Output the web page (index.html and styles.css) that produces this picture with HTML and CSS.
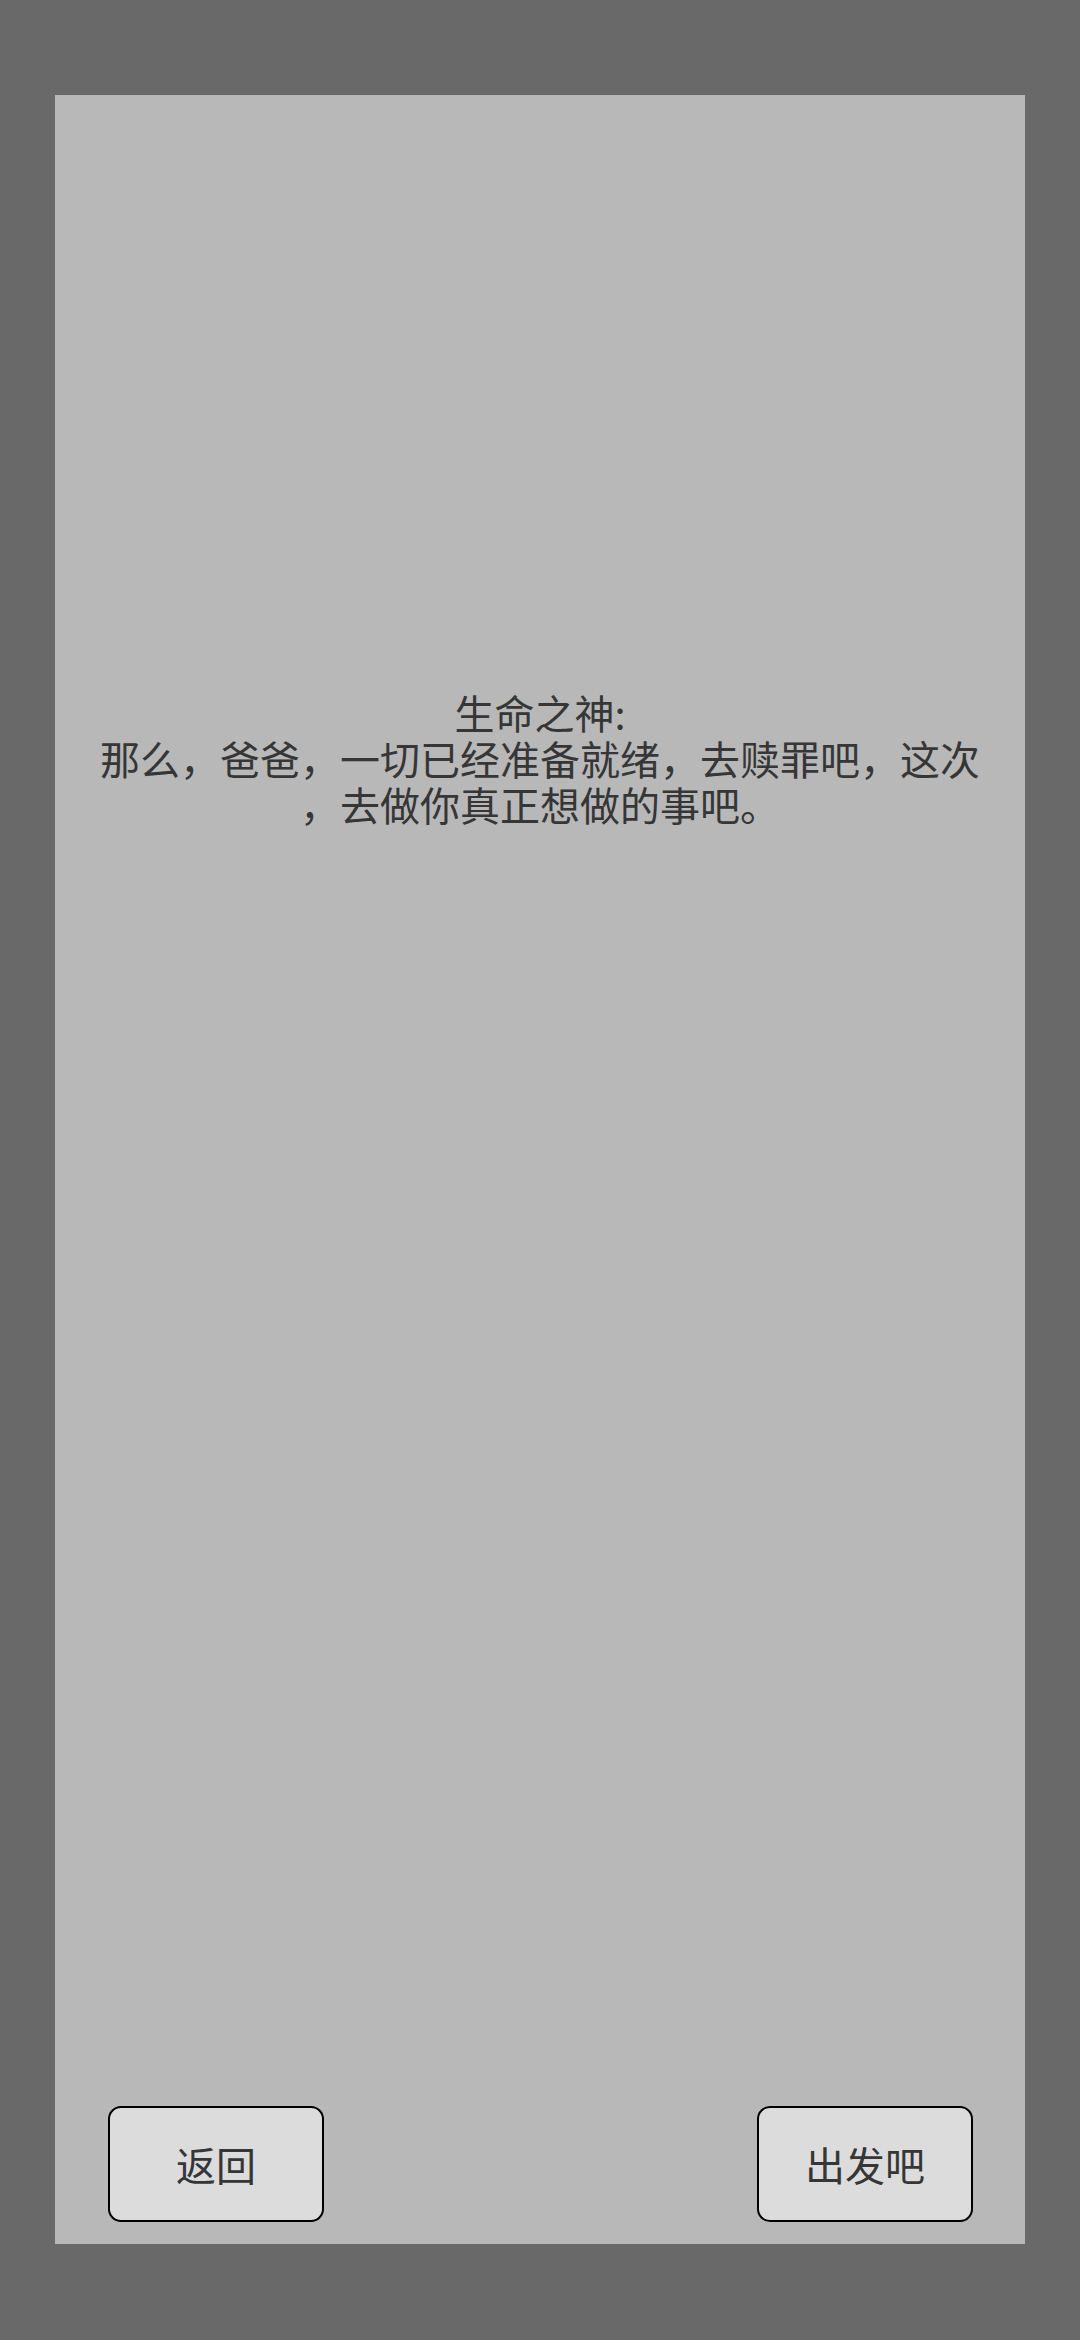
FILE: index.html
```html
<!DOCTYPE html>
<html lang="zh-CN">
<head>
<meta charset="utf-8">
<title>生命之神</title>
<link rel="stylesheet" href="styles.css">
</head>
<body>
<div class="panel">
  <p class="dialog">生命之神:<br>那么，爸爸，一切已经准备就绪，去赎罪吧，这次<br>，去做你真正想做的事吧。</p>
  <div class="actions">
    <div class="btn">返回</div>
    <div class="btn">出发吧</div>
  </div>
</div>
</body>
</html>
```

FILE: styles.css
```css
html, body {
  margin: 0;
  padding: 0;
}
body {
  background: #696969;
  width: 1080px;
  height: 2340px;
  font-family: "Noto Sans CJK SC", "Noto Sans", sans-serif;
  color: #363636;
  overflow: hidden;
}
.panel {
  box-sizing: border-box;
  margin: 95px 0 0 55px;
  width: 970px;
  height: 2149px;
  background: #b8b8b8;
  display: flex;
  flex-direction: column;
  justify-content: space-between;
}
.dialog {
  margin: 594px 0 0 0;
  text-align: center;
  font-size: 40px;
  line-height: 46px;
  white-space: nowrap;
}
.actions {
  display: flex;
  justify-content: space-between;
  padding: 0 52px 22px 53px;
}
.btn {
  box-sizing: border-box;
  width: 216px;
  height: 116px;
  background: #dcdcdc;
  border: 2.5px solid #000;
  border-radius: 13px;
  display: flex;
  align-items: center;
  justify-content: center;
  font-size: 40px;
  color: #363636;
}
```
